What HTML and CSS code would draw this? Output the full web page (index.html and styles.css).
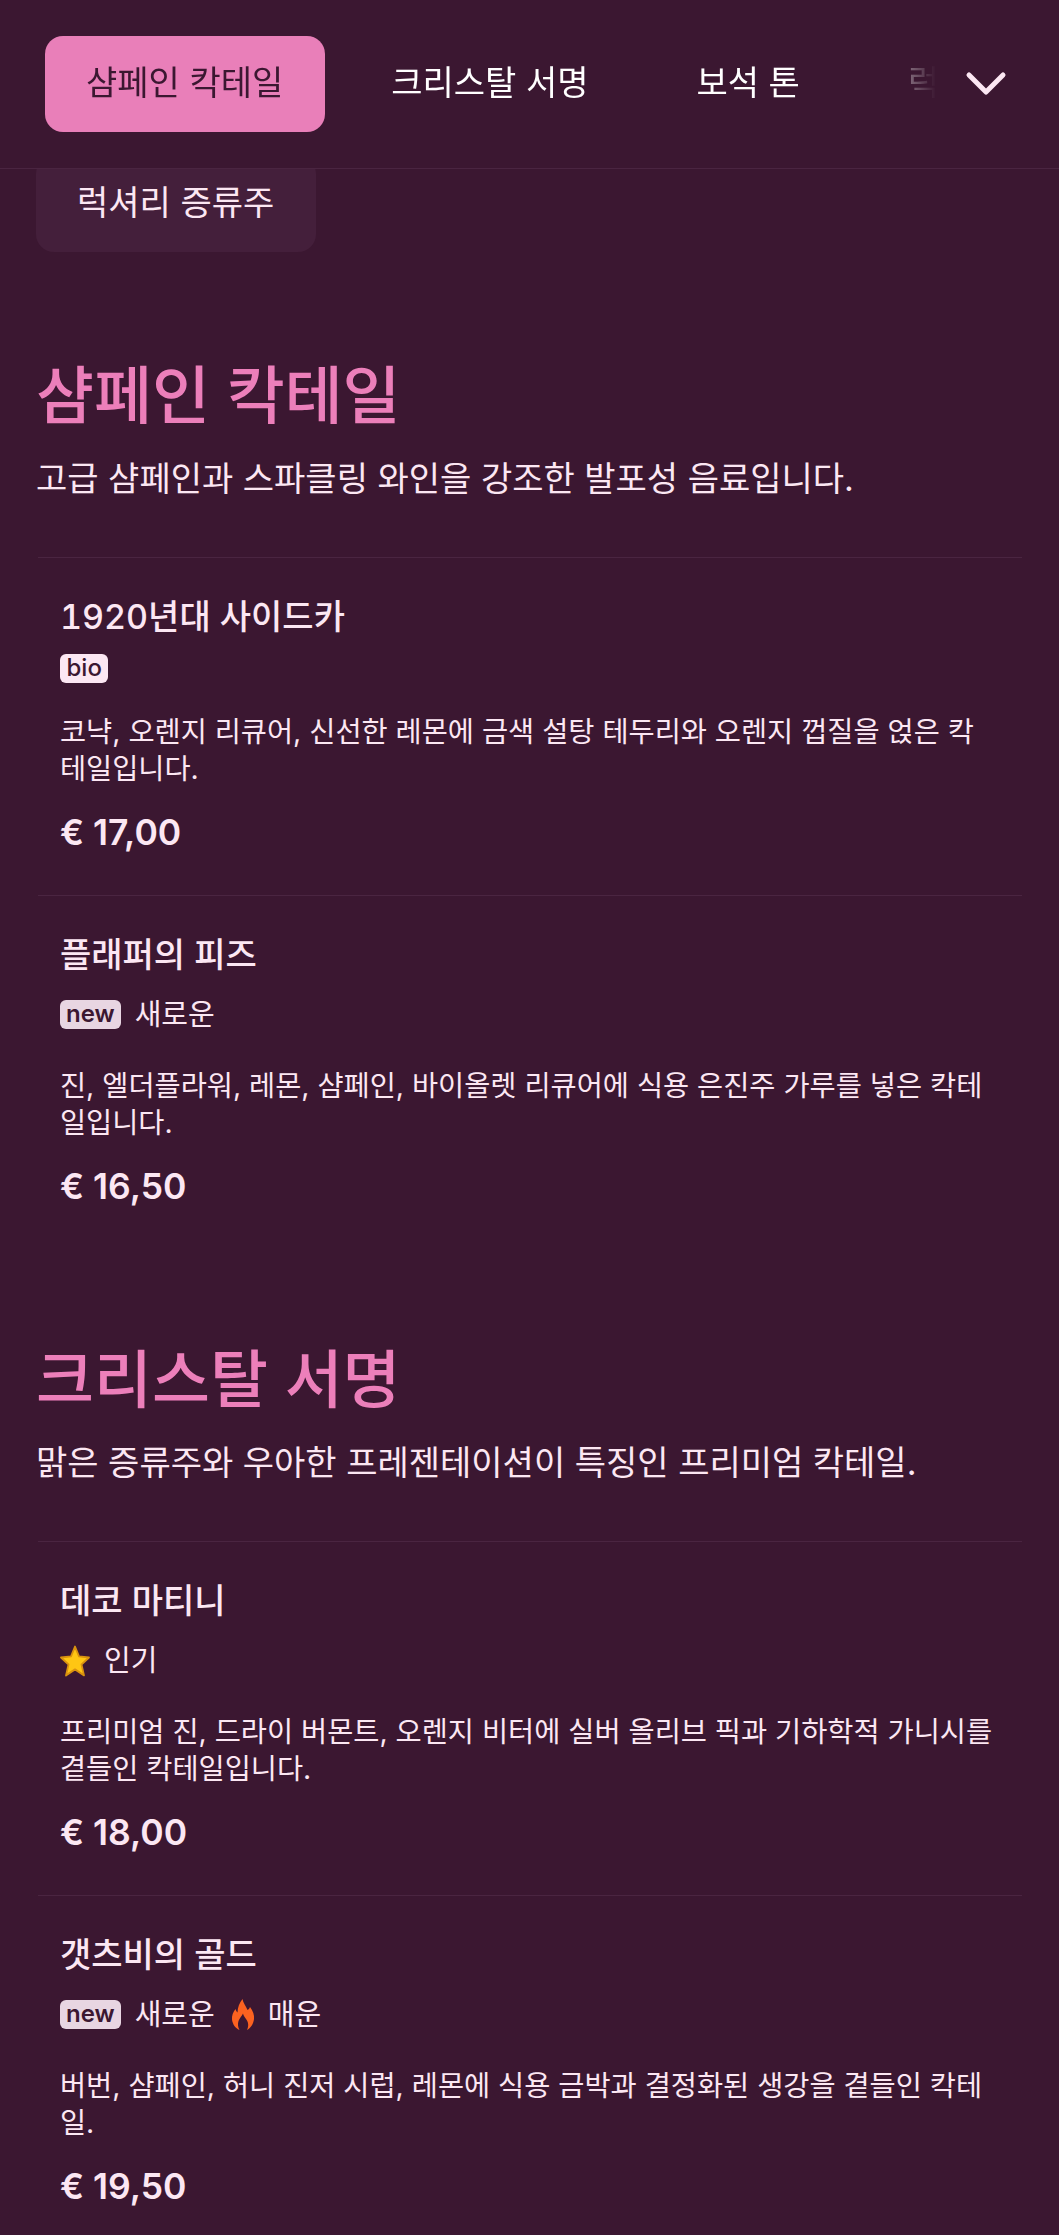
FILE: index.html
```html
<!DOCTYPE html>
<html lang="ko">
    <head>
        <meta charset="UTF-8">
        <link rel="stylesheet" href="styles.css">
    </head>
    <body>
        <header class="top-bar">
            <nav class="category-nav">
                <a class="category active">샴페인 칵테일</a>
                <a class="category">크리스탈 서명</a>
                <a class="category">보석 톤</a>
                <a class="category">럭셔리 증류주</a>
            </nav>
            <button class="expand-btn">
                <svg width="42" height="26" viewBox="0 0 42 26" fill="none">
                    <path d="M4 4 L21 21 L38 4" stroke="#fce7f3" stroke-width="5" stroke-linecap="round" stroke-linejoin="round"/>
                </svg>
            </button>
        </header>

        <main class="menu">
            <a class="category wrapped">럭셔리 증류주</a>

            <section class="menu-section">
                <h2>샴페인 칵테일</h2>
                <p class="section-desc">고급 샴페인과 스파클링 와인을 강조한 발포성 음료입니다.</p>
                <div class="items">
                    <article class="item">
                        <h3>1920년대 사이드카</h3>
                        <div class="tags">
                            <span class="badge bio">bio</span>
                        </div>
                        <p class="item-desc">코냑, 오렌지 리큐어, 신선한 레몬에 금색 설탕 테두리와 오렌지 껍질을 얹은 칵테일입니다.</p>
                        <div class="price">€ 17,00</div>
                    </article>
                    <article class="item">
                        <h3>플래퍼의 피즈</h3>
                        <div class="tags">
                            <span class="badge new">new</span>
                            <span class="tag-label">새로운</span>
                        </div>
                        <p class="item-desc">진, 엘더플라워, 레몬, 샴페인, 바이올렛 리큐어에 식용 은진주 가루를 넣은 칵테일입니다.</p>
                        <div class="price">€ 16,50</div>
                    </article>
                </div>
            </section>

            <section class="menu-section">
                <h2>크리스탈 서명</h2>
                <p class="section-desc">맑은 증류주와 우아한 프레젠테이션이 특징인 프리미엄 칵테일.</p>
                <div class="items">
                    <article class="item">
                        <h3>데코 마티니</h3>
                        <div class="tags">
                            <svg class="icon" width="30" height="32" viewBox="1 1.500 30 29.500" preserveAspectRatio="none">
                                <path d="M16 3 L20 12 L30 13 L22.500 19.500 L25 29.500 L16 24 L7 29.500 L9.500 19.500 L2 13 L12 12 Z" fill="#ffc613" stroke="#d9920f" stroke-width="1.800" stroke-linejoin="round"/>
                            </svg>
                            <span class="tag-label">인기</span>
                        </div>
                        <p class="item-desc">프리미엄 진, 드라이 버몬트, 오렌지 비터에 실버 올리브 픽과 기하학적 가니시를 곁들인 칵테일입니다.</p>
                        <div class="price">€ 18,00</div>
                    </article>
                    <article class="item">
                        <h3>갯츠비의 골드</h3>
                        <div class="tags">
                            <span class="badge new">new</span>
                            <span class="tag-label">새로운</span>
                            <svg class="icon flame" width="24" height="31" viewBox="-1 0 24 31">
                                <path d="M10.500 0 C11 4 14 7 15.500 11 C16.500 10.500 17.500 9.500 18 8 C21 12 22.500 16 22 20 C21.500 25 18.500 29 15 31 C17 27 16.500 23 14 20 C12.500 18 11.500 16.500 11 14.500 C10 17 7.500 19 6.500 22 C5.500 25 6 28.500 7.500 31 C3.500 29.500 0.500 25 0 20.500 C-0.300 17 1 13 3.500 10 C4 11.500 4.500 12.500 5.500 13.500 C5.500 8.500 7.500 3.500 10.500 0 Z" fill="#fb6220"/>
                            </svg>
                            <span class="tag-label">매운</span>
                        </div>
                        <p class="item-desc">버번, 샴페인, 허니 진저 시럽, 레몬에 식용 금박과 결정화된 생강을 곁들인 칵테일.</p>
                        <div class="price">€ 19,50</div>
                    </article>
                </div>
            </section>
        </main>
    </body>
</html>
```

FILE: styles.css
```css
body {
    font-family: Inter, "Noto Sans CJK KR", sans-serif;
    background-color: #3b1731;
    color: #fce7f3;
    margin: 0;
    height: 2235px;
    overflow: hidden;
}

.top-bar {
    position: relative;
    z-index: 5;
    display: flex;
    align-items: center;
    height: 168px;
    padding: 0 52px 0 45px;
    background-color: #3b1731;
    border-bottom: 1px solid #4a2541;
}

.category-nav {
    display: flex;
    flex: 1;
    gap: 25px;
    overflow: hidden;
    white-space: nowrap;
    -webkit-mask-image: linear-gradient(to right, #000 86%, rgba(0, 0, 0, 0.35) 97%, transparent 100%);
    mask-image: linear-gradient(to right, #000 86%, rgba(0, 0, 0, 0.35) 97%, transparent 100%);
    margin-right: 29px;
}

.category {
    flex: none;
    display: inline-block;
    padding: 0 42px 0 41px;
    height: 96px;
    line-height: 94px;
    font-size: 34px;
    border-radius: 18px;
    color: #fff;
}

.category.active {
    background-color: #e97fb9;
    color: #3b1731;
}

.category.wrapped {
    margin-top: -13px;
    background-color: #441f3b;
    color: #fce7f3;
}

.expand-btn {
    background: none;
    border: none;
    padding: 0;
    display: flex;
}

.menu {
    padding: 0 36px;
}

.menu-section {
    margin-top: 90px;
}

.category.wrapped + .menu-section {
    margin-top: 103px;
}

.menu-section h2 {
    margin: 0 0 19px;
    font-size: 63px;
    line-height: 80px;
    font-weight: 500;
    color: #ec7fba;
}

.section-desc {
    margin: 0 0 53px;
    font-size: 34px;
    line-height: 50px;
}

.items {
    margin: 0 1px 0 2px;
}

.item {
    padding: 36px 27px 40px 22px;
    border-top: 1px solid #4a2541;
}

.item h3 {
    margin: 0 0 14px;
    font-size: 34px;
    line-height: 46px;
    font-weight: 500;
    font-variant-numeric: tabular-nums;
    color: #fce7f3;
}

.tags {
    display: flex;
    align-items: center;
    gap: 14px;
}

.badge {
    display: block;
    height: 29px;
    line-height: 28px;
    padding: 0 6.500px;
    border-radius: 6px;
    font-size: 24px;
    font-weight: 500;
    color: #3b1731;
    background-color: #fce7f3;
}

.badge.new {
    font-weight: 600;
    padding: 0 6px;
    background-color: #e8d6e2;
}

.tag-label {
    font-size: 29px;
    line-height: 45px;
}

.flame {
    margin: 0 -1px 0 2px;
}

.item-desc {
    margin: 30px 0 24px;
    font-size: 28.4px;
    line-height: 37px;
}

.price {
    font-size: 35.500px;
    line-height: 44px;
    font-weight: 600;
}
```
